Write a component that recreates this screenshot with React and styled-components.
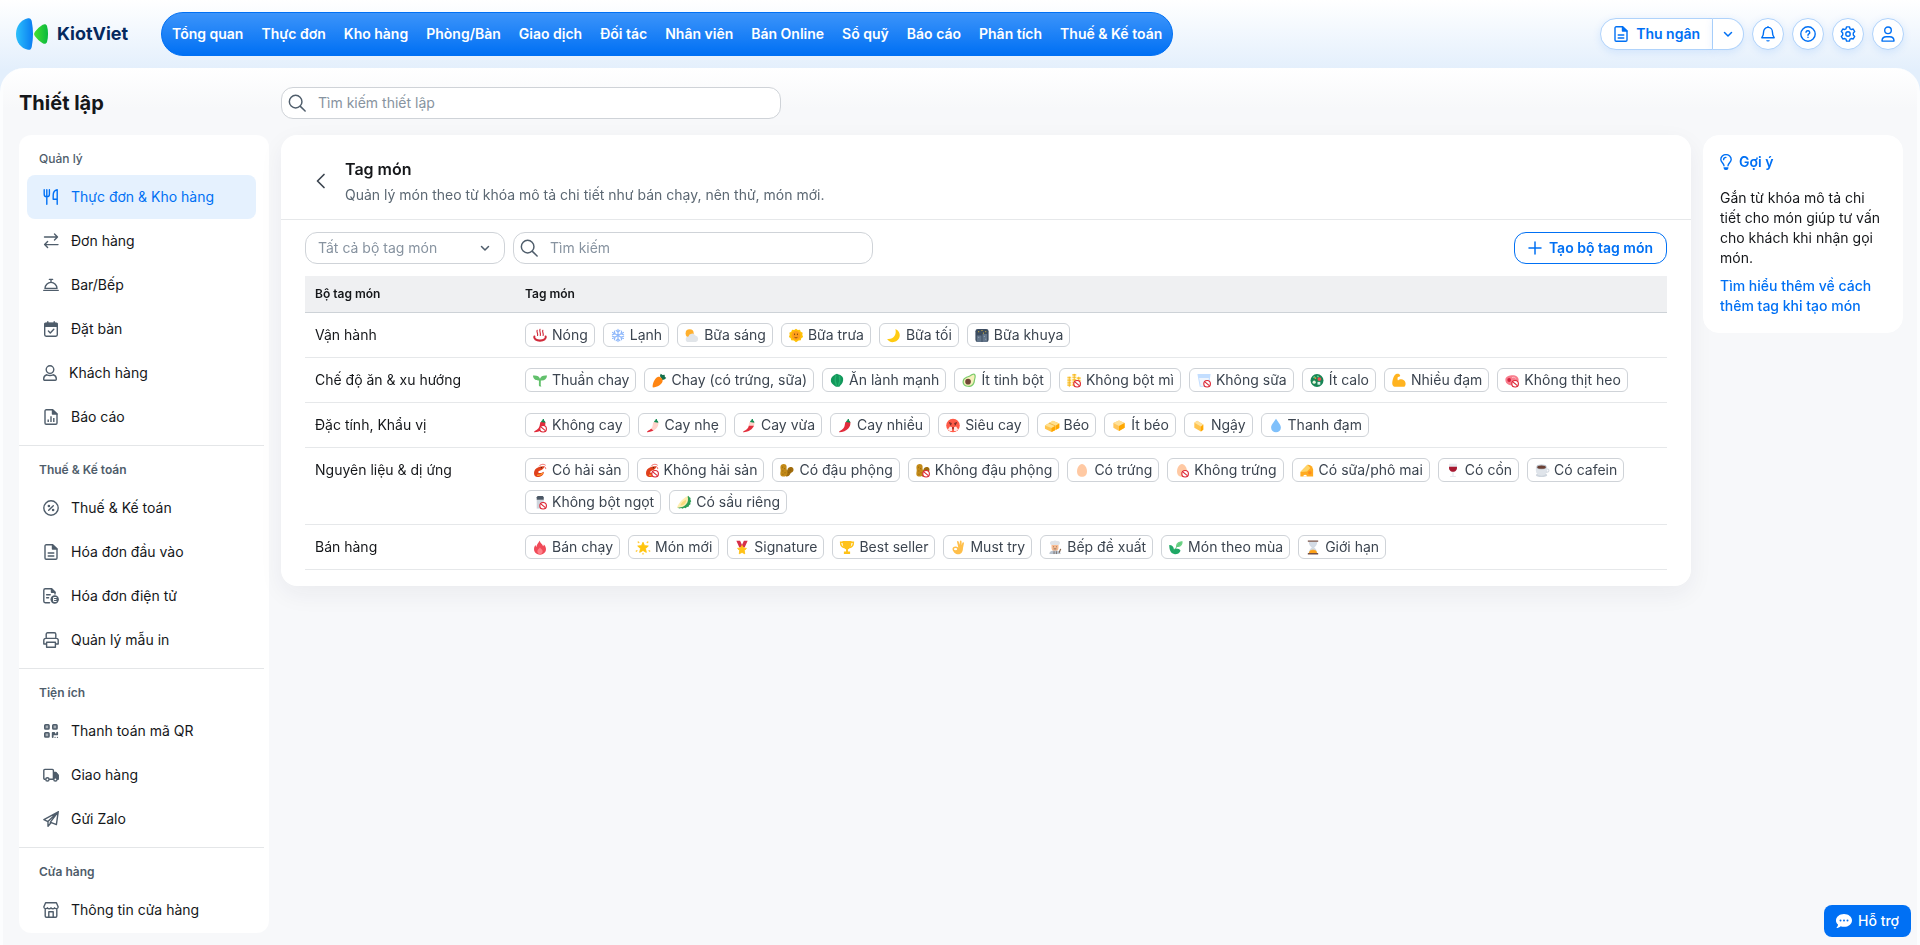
import React from "react";
import styled, { createGlobalStyle, css } from "styled-components";

const blue = "#0070f4";
const slate = "#4f5d6b";

const GlobalStyle = createGlobalStyle`
  *, *::before, *::after { box-sizing: border-box; }
  body {
    margin: 0;
    font-family: Inter, "Noto Sans", sans-serif;
    font-size: 14px;
    line-height: 20px;
    color: #15171a;
  }
  h1, h2, h3, p { margin: 0; }
  a { color: inherit; text-decoration: none; }
  button, input, select { font: inherit; color: inherit; }
  button { cursor: pointer; }
`;

/* Shell */
const Page = styled.div`
  display: flex;
  flex-direction: column;
  height: 100vh;
  background: #e3effc;
`;

const Header = styled.header`
  display: flex;
  flex: none;
  align-items: center;
  height: 92px;
  margin-bottom: -24px;
  padding: 0 16px 24px;
  background: linear-gradient(#ffffff, #e3effc 70px);
`;

const Logo = styled.a`
  display: flex;
  align-items: center;
  gap: 8px;
  width: 145px;
  color: #05295e;
  font-size: 18px;
  font-weight: 700;
`;

const Nav = styled.nav`
  display: flex;
  align-items: center;
  gap: 18px;
  height: 44px;
  padding: 0 10px;
  border: 1px solid ${blue};
  border-radius: 22px;
  background: linear-gradient(#3c94fa, ${blue});
  color: #fff;
  font-weight: 600;
  white-space: nowrap;
`;

const Actions = styled.div`
  display: flex;
  gap: 8px;
  margin-left: auto;
`;

const pill = css`
  display: flex;
  align-items: center;
  justify-content: center;
  height: 32px;
  border: 1px solid #b0d3fb;
  background: #fff;
  color: ${blue};
  box-shadow: 0 2px 8px rgba(0, 112, 244, 0.12);
`;

const RoundButton = styled.button`
  ${pill}
  width: 32px;
  padding: 0;
  border-radius: 16px;
`;

const SplitButton = styled.div`
  display: flex;
`;

const Cashier = styled.button`
  ${pill}
  gap: 7px;
  padding: 0 12px;
  border-radius: 16px 0 0 16px;
  font-weight: 600;
`;

const CashierMore = styled.button`
  ${pill}
  width: 31px;
  padding: 0;
  border-left: 0;
  border-radius: 0 16px 16px 0;
`;

const Panel = styled.div`
  display: flex;
  flex: 1;
  flex-direction: column;
  min-height: 0;
  padding: 19px 14px 12px 16px;
  border: solid #fcfdfe;
  border-width: 0 3px;
  border-radius: 24px 24px 0 0;
  background: linear-gradient(#ffffff, #f7f8fa 40px);
`;

const Top = styled.div`
  display: flex;
  align-items: center;
  margin-bottom: 16px;
`;

const PageTitle = styled.h1`
  width: 262px;
  font-size: 20px;
  font-weight: 700;
  line-height: 24px;
`;

const SearchBox = styled.label`
  display: flex;
  align-items: center;
  gap: 12px;
  width: ${(props) => props.$width};
  height: 32px;
  padding: 0 8px 0 6px;
  border: 1px solid #cfd3d8;
  border-radius: 12px;
  background: #fff;
  color: ${slate};

  input {
    flex: 1;
    min-width: 0;
    padding: 0;
    border: 0;
    outline: 0;
    background: transparent;
  }
  input::placeholder {
    color: #8793a0;
    opacity: 1;
  }
`;

const Columns = styled.div`
  display: flex;
  flex: 1;
  gap: 12px;
  min-height: 0;
`;

/* Sidebar */
const Sidebar = styled.aside`
  flex: none;
  width: 250px;
  padding-right: 5px;
  border-radius: 12px;
  background: #fff;
  overflow-y: auto;
  scrollbar-width: none;
`;

const Section = styled.section`
  padding: 16px 8px 6px;

  & + & {
    border-top: 1px solid #e4e6e8;
  }
`;

const SectionTitle = styled.h2`
  margin-bottom: 8px;
  padding-left: 12px;
  color: ${slate};
  font-size: 12px;
  font-weight: ${(props) => (props.$strong ? 600 : 500)};
  line-height: 16px;
`;

const MenuItem = styled.a`
  display: flex;
  align-items: center;
  gap: 12px;
  height: 44px;
  padding: 0 16px;
  border-radius: 8px;
  background: ${(props) => (props.$active ? "#e5f1fe" : "transparent")};
  color: ${(props) => (props.$active ? blue : "#15171a")};

  svg {
    color: ${(props) => (props.$active ? blue : slate)};
  }
`;

/* Tag list */
const Card = styled.main`
  flex: 1;
  align-self: flex-start;
  min-width: 0;
  padding-bottom: 16px;
  border-radius: 16px;
  background: #fff;
  box-shadow: 0 8px 24px rgba(30, 40, 60, 0.06);
`;

const CardHead = styled.div`
  display: flex;
  align-items: center;
  gap: 12px;
  height: 85px;
  padding: 8px 24px 0;
  border-bottom: 1px solid #e6e8ea;
`;

const BackButton = styled.button`
  display: flex;
  align-items: center;
  justify-content: center;
  width: 28px;
  height: 32px;
  padding: 0 0 0 4px;
  border: 0;
  background: none;
  color: #3c4550;
`;

const CardTitle = styled.h2`
  margin-bottom: 4px;
  font-size: 16px;
  font-weight: 600;
  line-height: 24px;
`;

const CardText = styled.p`
  color: #5c6873;
`;

const Toolbar = styled.div`
  display: flex;
  gap: 8px;
  padding: 12px 24px;
`;

const Filter = styled.label`
  display: grid;
  align-items: center;
  width: 200px;

  select,
  svg {
    grid-area: 1 / 1;
  }
  select {
    width: 100%;
    height: 32px;
    padding: 0 32px 0 12px;
    border: 1px solid #cfd3d8;
    border-radius: 12px;
    appearance: none;
    background: #fff;
    color: #8793a0;
  }
  svg {
    justify-self: end;
    margin-right: 12px;
    color: ${slate};
    pointer-events: none;
  }
`;

const CreateButton = styled.button`
  display: flex;
  align-items: center;
  gap: 7px;
  height: 32px;
  margin-left: auto;
  padding: 0 13px;
  border: 1px solid ${blue};
  border-radius: 12px;
  background: #fff;
  color: ${blue};
  font-weight: 600;
`;

const TableWrap = styled.div`
  padding: 0 24px;
`;

const Table = styled.table`
  width: 100%;
  border-spacing: 0;
  table-layout: fixed;
  text-align: left;

  th {
    height: 37px;
    padding: 0 10px;
    border-bottom: 1px solid #cdd2d7;
    background: #eff0f2;
    font-size: 12px;
    font-weight: 600;
  }
  th:first-child {
    width: 210px;
  }
  td {
    padding: 10px;
    border-bottom: 1px solid #e6e8ea;
    vertical-align: top;
    line-height: 24px;
  }
`;

const Tags = styled.div`
  display: flex;
  flex-wrap: wrap;
  gap: 8px;
`;

const Tag = styled.span`
  display: inline-flex;
  align-items: center;
  gap: 4px;
  height: 24px;
  padding: 0 6px;
  border: 1px solid #cfd3d8;
  border-radius: 6px;
  color: #3c4550;
  line-height: 20px;
  white-space: nowrap;
`;

/* Hint */
const Hint = styled.aside`
  flex: none;
  align-self: flex-start;
  width: 200px;
  padding: 16px;
  border: 1px solid #fff;
  border-radius: 16px;
  background: #fff;
`;

const HintTitle = styled.h3`
  display: flex;
  align-items: center;
  gap: 7px;
  margin-bottom: 16px;
  color: ${blue};
  font-size: 14px;
  font-weight: 600;
`;

const HintLink = styled.a`
  display: block;
  margin-top: 8px;
  color: ${blue};
  font-weight: 500;
`;

const Support = styled.button`
  position: fixed;
  right: 9px;
  bottom: 8px;
  display: flex;
  align-items: center;
  gap: 6px;
  height: 32px;
  padding: 0 12px;
  border: 0;
  border-radius: 8px;
  background: ${blue};
  color: #fff;
  font-weight: 500;
`;

/* Line icons */
const IconSvg = styled.svg`
  flex: none;
`;

const Icon = ({ children, size = 16, width, stroke = 1.4, box }) => (
  <IconSvg
    width={width || size}
    height={size}
    viewBox={box || "0 0 16 16"}
    fill="none"
    stroke="currentColor"
    strokeWidth={stroke}
    strokeLinecap="round"
    strokeLinejoin="round"
    aria-hidden="true"
  >
    {children}
  </IconSvg>
);

const docPath = "M3.5.8H9.5L14 5V14a1.2 1.2 0 0 1-1.2 1.2H3.2A1.2 1.2 0 0 1 2 14V2A1.2 1.2 0 0 1 3.5.8Z";
const docFold = <path d="M9.5.8V5H14Z" fill="currentColor" />;

const icons = {
  food: (
    <Icon>
      <path d="M1.2.8v4.4a2.6 2.6 0 0 0 5.2 0V.8M3.8.8v14.4M14.2 15.2V.8c-2.6.6-4 2.8-4 5.4v4h4" />
    </Icon>
  ),
  swap: (
    <Icon>
      <path d="M1.5 4h13M11.5 1l3 3-3 3M15 11.6H2M4.6 8.6l-3 3 3 3" />
    </Icon>
  ),
  bell: (
    <Icon>
      <path d="M.8 13.4h14.4M2 11.4a6 6 0 0 1 12 0ZM8 5V2.6M6.4 2.4h3.2" />
    </Icon>
  ),
  calendar: (
    <Icon>
      <rect x="1.7" y="2.2" width="12.6" height="13" rx="1.4" />
      <path d="M2 2.4h12v2.8H2Z" fill="currentColor" />
      <path d="M4.8.8v2M11.2.8v2M5.4 10l1.9 1.9 3.5-3.6" />
    </Icon>
  ),
  user: (
    <Icon width={14} box="0 0 14 16">
      <circle cx="7" cy="4.6" r="3.8" />
      <path d="M3.8 9.8c2 .9 4.4.9 6.4 0 2 .5 3.1 2 3.1 4v.4a1 1 0 0 1-1 1H1.7a1 1 0 0 1-1-1v-.4c0-2 1.100-3.500 3.100-4Z" />
    </Icon>
  ),
  report: (
    <Icon>
      <path d={docPath} />
      {docFold}
      <path d="M5.2 13v-2.500M8 13V7.200M10.800 13V9" strokeLinecap="butt" />
    </Icon>
  ),
  percent: (
    <Icon>
      <circle cx="8" cy="8" r="7.2" />
      <path d="M5.7 10.3l4.6-4.6" />
      <circle cx="5.9" cy="6" r=".6" fill="currentColor" />
      <circle cx="10.1" cy="10" r=".6" fill="currentColor" />
    </Icon>
  ),
  doc: (
    <Icon>
      <path d={docPath} />
      {docFold}
      <path d="M5.2 9h5.6M5.2 12h5.6" />
    </Icon>
  ),
  einvoice: (
    <Icon>
      <path d="M6.5 14.7H2.2A1.4 1.4 0 0 1 .8 13.3V2.2A1.4 1.4 0 0 1 2.2.8H8.500L12 4.200V6" />
      <path d="M8.500.8V4.200H12Z" fill="currentColor" />
      <path d="M3.600 6.800h3.600M3.600 9.800h2" />
      <circle cx="11.700" cy="11.500" r="4.200" fill="currentColor" stroke="none" />
      <path d="M13.200 9.500h-2.600v4H13.200M10.600 11.500h2.400" stroke="#fff" strokeWidth="1" />
    </Icon>
  ),
  printer: (
    <Icon>
      <path d="M3.200 6V2.200A1.400 1.400 0 0 1 4.600.8h6.800a1.400 1.400 0 0 1 1.400 1.400V6M3.200 12H.8V8.200A1.800 1.800 0 0 1 2.600 6.400h10.800a1.800 1.800 0 0 1 1.800 1.800V12h-2.400" />
      <path d="M3.600 10.200h8.800v5H3.600Z" />
    </Icon>
  ),
  qr: (
    <Icon stroke={1.6}>
      <g fill="currentColor" fillOpacity=".5">
        <rect x="1.800" y="1.800" width="4.200" height="4.200" rx=".8" />
        <rect x="9.800" y="1.800" width="4.200" height="4.200" rx=".8" />
        <rect x="1.800" y="9.800" width="4.200" height="4.200" rx=".8" />
      </g>
      <path d="M9.700 14V9.800h1.500v1.600h3V9.600" strokeWidth="1.800" />
      <path d="M12 14.300h.1M14.400 14.300h.1" strokeWidth="1.200" />
    </Icon>
  ),
  truck: (
    <Icon>
      <path d="M2.400 12.200H1.800a1 1 0 0 1-1-1V3.400a1 1 0 0 1 1-1h7.600a1 1 0 0 1 1 1v8.800H6.400M10.600 5.400h2.200l2.400 2.800v4h-.6" />
      <path d="M11 5.600h1.800l2.200 2.800v3H11Z" fill="currentColor" />
      <circle cx="4.400" cy="12.400" r="1.600" fill="#fff" />
      <circle cx="12.400" cy="12.400" r="1.600" fill="#fff" />
    </Icon>
  ),
  plane: (
    <Icon>
      <path d="M15.200.8L.9 8.600l4 2L15.200.8l-1.800 12.800-5-2M5 10.700v4.500l3-3.400M15.200.8L7.200 11.300" />
    </Icon>
  ),
  store: (
    <Icon>
      <path d="M2.600.8h10.800l1.800 4.200a2 2 0 0 1-3.600.8 2.200 2.200 0 0 1-3.600 0 2.200 2.200 0 0 1-3.600 0A2 2 0 0 1 .8 5ZM2.200 7.400V14a1.200 1.200 0 0 0 1.200 1.200h9.200a1.200 1.200 0 0 0 1.200-1.200V7.400" />
      <path d="M5.800 15V9.800h4.400V15" />
    </Icon>
  ),
  search: (
    <Icon size={18} stroke={1.3}>
      <circle cx="6.8" cy="6.8" r="5.6" />
      <path d="M11 11l4.2 4.2" />
    </Icon>
  ),
  down: (
    <Icon stroke={1.5}>
      <path d="M4.500 6.500l3.500 3.500 3.500-3.500" />
    </Icon>
  ),
  back: (
    <Icon stroke={1.7}>
      <path d="M11 1.500L4.500 8l6.500 6.500" />
    </Icon>
  ),
  plus: (
    <Icon width={14} box="1 0 14 16" stroke={1.5}>
      <path d="M8 2v12M2 8h12" />
    </Icon>
  ),
  notify: (
    <Icon>
      <path d="M8 1.400a4.400 4.400 0 0 1 4.400 4.400c0 3.600.8 4.800 1.800 6H1.800c1-1.200 1.800-2.400 1.800-6A4.400 4.400 0 0 1 8 1.400ZM8 .6v.8" />
      <path d="M6.200 14.200h3.600a1.800 1.400 0 0 1-3.600 0Z" fill="currentColor" stroke="none" />
    </Icon>
  ),
  help: (
    <Icon>
      <circle cx="8" cy="8" r="7.2" />
      <path d="M6 6.200A1.800 1.600 0 0 1 7.800 4.800h.4a1.600 1.600 0 0 1 .7 3C8.200 8.200 8 8.500 8 9.200M8 11.300v.1" />
    </Icon>
  ),
  gear: (
    <Icon>
      <path d="M6.500.9h3l.5 1.900 1.300.7 1.900-.5 1.500 2.600-1.400 1.400v2l1.400 1.400-1.500 2.600-1.900-.5-1.300.7-.5 1.900h-3L6 13.200l-1.300-.7-1.900.5-1.500-2.600L2.700 9V7L1.300 5.600 2.800 3l1.900.5L6 2.800Z" />
      <circle cx="8" cy="8" r="2.200" />
    </Icon>
  ),
  account: (
    <Icon>
      <circle cx="8" cy="4.300" r="3.300" />
      <path d="M2 15.100c0-2.700 1.700-4.400 4.300-4.400h3.400c2.600 0 4.300 1.700 4.300 4.400Z" />
    </Icon>
  ),
  bulb: (
    <Icon width={12} box="0 0 12 16">
      <path d="M4 11.700C3.800 9.200.8 8.200.8 5.600a5.200 5 0 0 1 10.400 0c0 2.600-3 3.600-3.200 6.100M3.600 5.600A2.300 2.300 0 0 1 5.900 3.400" />
      <path d="M3.600 13.300h4.800v.6a2 2 0 0 1-2 2h-.8a2 2 0 0 1-2-2Z" fill="currentColor" stroke="none" />
    </Icon>
  ),
  chat: (
    <Icon stroke={0}>
      <path d="M8 1c4.500 0 8 2.900 8 6.400s-3.500 6.400-8 6.400c-1.200 0-2.300-.2-3.300-.6C3.500 14.300 1.800 15 .3 15c1-.9 1.700-2.200 1.700-3.400C.7 10.500 0 9.100 0 7.400 0 3.900 3.500 1 8 1Z" fill="currentColor" />
      <g fill={blue}>
        <circle cx="4.500" cy="7.600" r="1" />
        <circle cx="8" cy="7.600" r="1" />
        <circle cx="11.500" cy="7.600" r="1" />
      </g>
    </Icon>
  ),
};

/* Tag pictures */
const ban = (
  <g fill="none" stroke="#dc2433" strokeWidth="1.200">
    <circle cx="11.300" cy="11.500" r="3.500" fill="#fff" />
    <path d="M8.900 9.500l4.800 4" />
  </g>
);
const stem = <path d="M9 4.200c.6-1 1-1.700 1.800-1.700V1h1.400v1.800c1 .3 1.400 1 1.400 2.200Z" fill="#128a52" />;
const chiliPath = "M8.500 4.200h5.200c.6 5.500-3 10.200-12.100 11 0-1.500 4-2.200 5.400-5.200C7.900 8.300 7.700 6.200 8.500 4.200Z";
const shrimp = (
  <g>
    <path d="M4 14.800C1.300 13.800.9 9.500 2.800 7c1.900-2.600 6-4 9.900-3.500-.2 2.400-2.300 4.100-5 4.700-1.600.4-2.300 2.200-.5 2.500 1.700.3 3-.2 4.700-1.300.8 2.900-3.900 6.700-7.900 5.400Z" fill="#e0401c" />
    <path d="M5 13c3 .4 5-.8 6-2.200" stroke="#ff9d2e" strokeWidth="1.600" fill="none" />
    <path d="M7 3.500C9 1 12 1 14 2.500M12 4c1.500 0 2.300 1 2 2.500" stroke="#f0605c" fill="none" />
    <circle cx="9.500" cy="5" r=".7" fill="#402010" />
  </g>
);
const peanut = (
  <g>
    <path d="M5.800 12.500c.3-3.500 2.200-3.200 2.700-5.500C9 4.500 11.500 3.500 13.500 4.700c2 1.300 1.800 3.800.3 5-1.400 1-2 1.200-2.900 2.800-1.300 2.200-4.500 2.700-5.100 0Z" fill="#a06c0c" />
    <path d="M1 4.500C1 2 2.700 1 4.500 1S8 2.300 7.600 4.500c-.3 1.700.1 2.200.6 4 .6 2.700 0 6-3.700 6S.6 12 1.200 9C1.600 7 1 6.500 1 4.500Z" fill="#c38a18" />
    <path d="M3 4.500h.8M5.200 6h.8M3.200 8.500h.8M5.500 10.500h.8M3.300 12h.8M11 7.500h1M9.500 10h1" stroke="#7d5208" strokeWidth=".9" />
  </g>
);
const egg = <path d="M8 1.200c3 0 5.300 4.400 5.300 7.800 0 3.500-2.200 5.800-5.300 5.800S2.700 12.500 2.700 9C2.700 5.600 5 1.200 8 1.200Z" fill="#ffc9a3" />;

const pictures = {
  hot: (
    <g fill="none" stroke="#d02a3a" strokeWidth="1.200" strokeLinecap="round">
      <path d="M5 2.500c-1 2 1.200 3 .4 5.500M8 1.500c-1 2.200 1.200 3.500.3 6.500M11 2.500c-1 2 1.200 3 .3 5.500" />
      <path d="M2 9.200C1.200 11.500 4 13.500 8 13.500s6.800-2 6-4.300" strokeWidth="2.200" />
    </g>
  ),
  snow: (
    <g fill="none" stroke="#8fb8fb" strokeWidth="1.200" strokeLinecap="round">
      <path d="M8 1.500v13M2.200 4.800l11.600 6.400M2.200 11.200l11.600-6.400M6 2.500l2 2 2-2M6 13.500l2-2 2 2M2 7.200l2.800-1L4.200 3.400M14 8.800l-2.800 1 .6 2.800M2 8.800l2.800 1-.6 2.800M14 7.200l-2.800-1 .6-2.800" />
    </g>
  ),
  cloud: (
    <g>
      <circle cx="5.500" cy="5.800" r="4.300" fill="#ffb02e" />
      <path d="M4.500 15a3 3 0 0 1-.3-6A4 4 0 0 1 11.500 8a3.600 3.600 0 0 1 .5 7Z" fill="#e1e5e9" />
    </g>
  ),
  sun: (
    <g>
      <path d="M8 .8l1.900 1.300 2.300-.3.800 2.200 2.100 1-.4 2.300.8 2.200-1.900 1.400-.5 2.300-2.300.1L8 15.200l-2.200-1.900-2.900-.1-.5-2.300L.5 9.500l.8-2.200L.9 5 3 4l.8-2.200 2.300.3Z" fill="#ffc107" />
      <circle cx="8" cy="8" r="4.700" fill="#ff9f1a" />
      <path d="M6.500 6v1.600M9.500 6v1.600M6.500 10c1 .6 2 .6 3 0" stroke="#6d3b0c" strokeWidth=".9" fill="none" />
    </g>
  ),
  moon: <path d="M9.500 1.200c6.800 3 6.100 12.500-1.800 13.800C4.800 15.500 2 14 .7 11.700 7.500 12.500 11 7.500 9.500 1.200Z" fill="#ffcb12" />,
  night: (
    <g>
      <rect x="1" y="1" width="14" height="14" rx="2.500" fill="#3c4c60" />
      <path d="M2.500 8h5v7h-5ZM8.500 6.500h5V15h-5Z" fill="#63758a" />
      <path d="M4 10h1M10 9h1M11.500 12h1" stroke="#9fb0c0" />
      <path d="M4 4h1M7.500 2.800h1M11.500 4h1M9 5.500h1" stroke="#ffd23a" />
    </g>
  ),
  sprout: <path d="M.5 2.800c4-.5 6.900.8 7.500 3.400.6-2.600 3.500-3.900 7.500-3.400-.3 4-3.100 5.700-6.600 5.200l-.1 4.500c0 1.300.6 1.800 1.200 2H8c-.9-.4-1.200-1-1.200-2L6.900 8C3.600 8.300.8 6.800.5 2.800Z" fill="#62c06c" />,
  carrot: (
    <g>
      <path d="M9 3.200l.8-2.400 2 1.400 2.200-.2.200 2 1.500 1.500-2 1.500-2.200.5Z" fill="#14704c" />
      <path d="M6.500 4.200c2.200-1.200 6 1.600 5.300 4.500-.8 3.500-5.300 6-10.300 6.700C.4 13 2.900 6 6.500 4.200Z" fill="#ff8512" />
    </g>
  ),
  green: (
    <g>
      <path d="M8 .8c1.200.8 2.500.8 3.500 1.500C13.500 3.500 15 5 14.500 8c-.4 3-2.300 4.500-4 6.700H7C4.500 13 1.200 11 1.500 7.500 1.700 4 4.500 3 5.500 1.800Z" fill="#12975b" />
      <path d="M7 2.500c-1.500 3-1 7 .5 11M10.500 3c1 3.500.5 7-1 10.500" stroke="#23b26d" strokeWidth="1.500" fill="none" />
    </g>
  ),
  avocado: (
    <g>
      <path d="M14.600 1.300c1.500 2-.1 4.900-.3 7.200-.4 4.700-4.300 7-8 6.300C2 14.200.2 10.800 1.600 7.300 3 4.200 7 3.800 9 2.500c2-1.200 4.200-2.700 5.600-1.200Z" fill="#7ccb6c" />
      <path d="M13.600 2.500c.9 1.600-.4 4-.6 6-.4 3.700-3.500 5.700-6.400 5.100-3.400-.7-4.900-3.100-3.800-5.900 1.200-2.700 4.700-2.900 6.800-4.200 1.700-1 3.300-2.300 4-1Z" fill="#f6f0bb" />
      <circle cx="7" cy="9.300" r="3" fill="#6f4636" />
    </g>
  ),
  wheat: (
    <g>
      <g stroke="#ffcf4a" strokeWidth="4.200" strokeDasharray="2 .7">
        <path d="M3 4v10M8.300 1v13M13 4.500v9" />
      </g>
      <path d="M3 4v11M8.300 1v14M13 4v10" stroke="#e9a91d" strokeWidth=".8" />
      {ban}
    </g>
  ),
  milk: (
    <g>
      <path d="M1 1.200h14L13 14.800H3.500Z" fill="#c3deff" />
      <path d="M2.800 5.500h10.400L12 13.800H4.500Z" fill="#f0f5fc" />
      {ban}
    </g>
  ),
  salad: (
    <g>
      <circle cx="8" cy="8" r="6.900" fill="#188555" />
      <path d="M4 5l2-1M8 3.500l2 .5" stroke="#5cd18a" strokeWidth="1.500" />
      <circle cx="10.500" cy="6.500" r="2" fill="#f04e51" />
      <circle cx="5" cy="9.800" r="1.700" fill="#e8f5db" />
      <path d="M8.500 9.500h3v3h-3Z" fill="#d9f2ec" />
      <circle cx="6.300" cy="5.500" r="1" fill="#f59c35" />
    </g>
  ),
  arm: (
    <path
      d="M5 1.200c1.600-.8 4-.2 4.200 1.300.2 1.300-1 1.900-2.400 1.800-.6 1.200-.4 2.600.1 3.800 1.600-1.500 4.400-1.800 6.300-.4 2.700 2.100 2 6.200.3 7H3.500c-3.200-.5-3-4.500-2-8C2.300 4.200 3.200 2.100 5 1.200Z"
      fill="#ffb31f"
    />
  ),
  pork: (
    <g>
      <path d="M1 6.500c.5-3.500 9-5.500 12.500-2.500 2.300 2 2 5.500-.5 7.500-3 2-6 2-8.500 1C1.700 11.500.7 9 1 6.500Z" fill="#f87c8c" />
      <circle cx="5" cy="7.500" r="2" fill="#d1243f" />
      <path d="M8 5c2-.8 3.500-.3 4 1" stroke="#ffc4c9" fill="none" />
      {ban}
    </g>
  ),
  noChili: (
    <g>
      <path d={chiliPath} fill="#e12d3d" />
      {stem}
      {ban}
    </g>
  ),
  chiliLight: (
    <g>
      <path d={chiliPath} fill="#ffd3cb" />
      <path d="M6 11.600c-1.400 1.600-4.400 2.100-4.400 3.600 2.900-.3 5.100-.9 6.900-1.800Z" fill="#e12d3d" />
      {stem}
    </g>
  ),
  chiliMid: (
    <g>
      <path d={chiliPath} fill="#ffd3cb" />
      <path d="M7.900 8.200C6.900 13 1.600 13.500 1.600 15.200c6.400-.5 10.200-3.500 11.600-7Z" fill="#e12d3d" />
      {stem}
    </g>
  ),
  chili: (
    <g>
      <path d={chiliPath} fill="#e12d3d" />
      {stem}
    </g>
  ),
  hotFace: (
    <g>
      <circle cx="8" cy="8" r="7.200" fill="#ff5a48" />
      <path d="M3.800 5.200l2.700.8M12.200 5.200l-2.700.8M4.800 7.300h1.500M9.700 7.300h1.500" stroke="#54201c" strokeWidth="1.100" />
      <path d="M2.500 12.200l2.200-3 2.300.8v4l-2.500-.2ZM9 10l2.300-.8 2.200 3-2 1.600-2.500.2Z" fill="#ffe9e5" />
      <path d="M7.300 9.500h1.400V12H7.300Z" fill="#84201c" />
    </g>
  ),
  butter: (
    <g>
      <path d="M.5 8L9 3l6.700 2.800v5L7.500 15 .5 11.500Z" fill="#ffc44e" />
      <path d="M.5 8L9 3l6.700 2.800-8.200 5Z" fill="#ffe08f" />
      <path d="M7.500 10.800V15l3.800-2V8.500ZM12.300 8v4.500l3.400-1.900V5.900Z" fill="#ffa700" />
      <path d="M4.800 5.500l7 3" stroke="#f3b53d" />
    </g>
  ),
  butterCube: (
    <g>
      <path d="M8 2.800l6 2.700v5L8 14l-6-3.500v-5Z" fill="#ffc65c" />
      <path d="M8 2.800l6 2.700-6 3-6-3Z" fill="#ffe19a" />
      <path d="M8 8.500l6-3v5L8 14Z" fill="#ffa700" />
    </g>
  ),
  butterSlice: (
    <g>
      <path d="M3 5l3-2 6.500 4v5.500L10 14.500l-7-4Z" fill="#ffc44e" />
      <path d="M10 9l2.500-2v5.500L10 14.500Z" fill="#ffa700" />
      <path d="M3 5l3-2 6.500 4L10 9Z" fill="#ffe19a" />
    </g>
  ),
  drop: <path d="M8 .8c2.500 4 5.200 6.500 5.200 9.300a5.200 5.200 0 0 1-10.400 0C2.800 7.300 5.500 4.800 8 .8Z" fill="#7fc0fb" />,
  shrimp,
  noShrimp: (
    <g>
      {shrimp}
      {ban}
    </g>
  ),
  peanut,
  noPeanut: (
    <g>
      {peanut}
      {ban}
    </g>
  ),
  egg,
  noEgg: (
    <g>
      {egg}
      {ban}
    </g>
  ),
  cheese: (
    <g>
      <path d="M1 9.500L8.500 2C12 1.500 14 4 14.500 7v7.500H1Z" fill="#ffab20" />
      <path d="M1 9.500L8.500 2l3 3.500L8 9Z" fill="#ffd467" />
      <circle cx="11" cy="10.500" r="1.900" fill="#ff8c1d" />
      <path d="M4 14.500a2 2 0 0 1 4 0Z" fill="#fff" />
    </g>
  ),
  wine: (
    <g>
      <path d="M4 .8h8c.8 4-.6 8-4 8s-4.800-4-4-8ZM7.400 8.800h1.200v5H11v1.200H5v-1.200h2.400Z" fill="#e5e9ee" />
      <path d="M3.800 4h8.400c.4 3.200-1.300 5.300-4.200 5.300S3.400 7.200 3.800 4Z" fill="#a71931" />
    </g>
  ),
  coffee: (
    <g>
      <ellipse cx="7.500" cy="13" rx="6" ry="2" fill="#cfd6de" />
      <path d="M1.500 4.500h12V8c0 3.500-2.800 5.500-6 5.500s-6-2-6-5.500Z" fill="#dfe4ea" />
      <path d="M13 6.500h.8a1.600 1.600 0 0 1 0 3.200h-1.600" stroke="#d5dbe2" strokeWidth="1.200" fill="none" />
      <ellipse cx="7.500" cy="4.300" rx="5.500" ry="2.600" fill="#b9c1cb" />
      <ellipse cx="7.500" cy="4.500" rx="4.600" ry="1.800" fill="#6b4034" />
    </g>
  ),
  salt: (
    <g>
      <path d="M4.500 5h7.500v9.500H4.500Z" fill="#cdd4dc" />
      <path d="M5.500 1h5.500L12 2.500V5H4.500V2.500Z" fill="#4b5765" />
      {ban}
    </g>
  ),
  durian: (
    <g>
      <path d="M12.500.8l1.300 1.700 1.200.8-.2 1.800.9 1.500-1 1.500.2 1.800-1.500 1-.5 1.700-1.800.3-1.300 1.200-1.700-.4-1.600 1-1.600-.7-1.500.5L1 13.500Z" fill="#2f9f55" />
      <path d="M11.800 1.500c2 6.500-2.300 12.500-11.300 12C2.500 8.500 6.800 3.500 11.800 1.500Z" fill="#ffeeb0" />
      <path d="M10.300 5c.2 4-2.800 6.200-6.300 6.300 1-2.800 3.200-5.300 6.300-6.300Z" fill="#f9da7c" />
    </g>
  ),
  fire: (
    <g>
      <path d="M7.800.5C7.500 3 10.800 4.300 11.300 6.800c.5-.5.8-1.200.8-2 2.500 2.200 3 6 1.200 8.400-2.700 3.500-8.500 3-10.700-.2C.7 10 2 7 3.200 5.500c0 .9.400 1.600 1 2C4.300 5 5.800 3.500 7.800.5Z" fill="#f04a58" />
      <path d="M8 7.800c.2 1.500 2.800 2 2.800 4.200 0 1.900-1.200 3-2.800 3s-2.800-1.100-2.800-3C5.200 10 7.500 9.300 8 7.800Z" fill="#ff7f88" />
    </g>
  ),
  star: (
    <g>
      <path d="M8 2.500l1.600 3.600 4 .4-3 2.700.9 4L8 11.200l-3.500 2 .9-4-3-2.700 4-.4Z" fill="#ffc40c" stroke="#ffc40c" strokeLinejoin="round" />
      <path d="M8 14.300v.7M1.500 11.500l-.6.400M14.500 11.500l.6.400M3.500 2.700l-.6-.6M12.500 2.700l.6-.6" stroke="#ffc93c" strokeWidth="1.500" strokeLinecap="round" />
    </g>
  ),
  medal: (
    <g>
      <path d="M2 .8h4l2 4.500 2-4.500h4L10.800 8H5.200Z" fill="#d62f48" />
      <path d="M8 5.800l1.500 2.700 3.200.5-2.300 2.300.5 3.400L8 13.200l-2.900 1.500.5-3.400L3.300 9l3.200-.5Z" fill="#ffc218" stroke="#ffc218" strokeLinejoin="round" />
    </g>
  ),
  trophy: (
    <g>
      <path d="M4 2.500H1.200c0 3.500 1 5 3.800 5.500M12 2.500h2.800c0 3.500-1 5-3.800 5.500" stroke="#ffc218" strokeWidth="1.500" fill="none" />
      <path d="M3.200 1h9.600c.1 4.500-1 8-3.800 9v2.200h2.300V15H4.700v-2.800H7V10C4.200 9 3.100 5.500 3.200 1Z" fill="#ffc218" />
    </g>
  ),
  hand: (
    <g>
      <path
        d="M8.300 8L7 2.300C6.800 1 8.300.6 8.700 1.800l1 3.200.3-3.400c.1-1.300 1.700-1.200 1.800 0l.1 4 .7-2.400c.4-1.200 1.900-.8 1.700.5l-1 4.800c0 3.500-1.700 6.700-5 6.700-3 0-5.300-2-5.300-4.300Z"
        fill="#ffbf4a"
      />
      <ellipse cx="5.400" cy="9.700" rx="2.500" ry="2" fill="#fff" stroke="#ffbf4a" strokeWidth="1.500" />
    </g>
  ),
  chef: (
    <g>
      <path d="M3.800 5.500C1.500 3.500 3.200.8 5.800 1.300c1-1 3.400-1 4.400 0 2.600-.5 4.300 2.200 2 4.200Z" fill="#dfe3e8" />
      <path d="M4.300 5.500h7.400v2.700a3.700 3.700 0 0 1-7.400 0Z" fill="#f8bb91" />
      <path d="M2 15c0-2.700 2-3.800 6-3.800s6 1.100 6 3.800Z" fill="#b9c3cf" />
      <path d="M6 7.300h1M9 7.300h1M6.500 9.500h3M7 12v3M9.500 12v3" stroke="#68584f" strokeWidth=".8" />
      <path d="M14 9.500l-1.500 4" stroke="#7a5a42" strokeWidth="1.300" />
    </g>
  ),
  leaf: (
    <g>
      <path d="M15 1.500c.3 4.500-2.700 6.700-7 6C7.700 3.800 10.500 1.500 15 1.500Z" fill="#6fd487" />
      <path d="M.8 5.500c3.200 0 4.700 2 5 4.300C8 8.500 12 9.500 12.800 11.500c-1 2.800-3.300 3.800-6 3.700C2.500 14.800.8 11 .8 5.500Z" fill="#1fa866" />
      <path d="M13 3L5.500 11" stroke="#57bd75" strokeWidth=".9" />
    </g>
  ),
  glass: (
    <g>
      <path d="M3.500 2h9c0 3.300-1.500 4.800-3.300 6 1.800 1.300 3.300 3 3.300 6h-9c0-3 1.500-4.700 3.300-6C5 6.800 3.500 5.300 3.500 2Z" fill="#d3dbe5" />
      <path d="M4.200 13.500c0-3.500 7.600-3.500 7.600 0Z" fill="#ffa010" stroke="#ffa010" />
      <path d="M2.500 1.300h11M2.500 14.700h11" stroke="#765044" strokeWidth="1.400" />
    </g>
  ),
};

const Picture = ({ name }) => (
  <IconSvg width="16" height="16" viewBox="0 -1 16 17" aria-hidden="true">
    {pictures[name]}
  </IconSvg>
);

/* Data */
const navItems = [
  "Tổng quan",
  "Thực đơn",
  "Kho hàng",
  "Phòng/Bàn",
  "Giao dịch",
  "Đối tác",
  "Nhân viên",
  "Bán Online",
  "Sổ quỹ",
  "Báo cáo",
  "Phân tích",
  "Thuế & Kế toán",
];

const menu = [
  {
    title: "Quản lý",
    items: [
      ["food", "Thực đơn & Kho hàng"],
      ["swap", "Đơn hàng"],
      ["bell", "Bar/Bếp"],
      ["calendar", "Đặt bàn"],
      ["user", "Khách hàng"],
      ["report", "Báo cáo"],
    ],
  },
  {
    title: "Thuế & Kế toán",
    items: [
      ["percent", "Thuế & Kế toán"],
      ["doc", "Hóa đơn đầu vào"],
      ["einvoice", "Hóa đơn điện tử"],
      ["printer", "Quản lý mẫu in"],
    ],
  },
  {
    title: "Tiện ích",
    items: [
      ["qr", "Thanh toán mã QR"],
      ["truck", "Giao hàng"],
      ["plane", "Gửi Zalo"],
    ],
  },
  {
    title: "Cửa hàng",
    items: [["store", "Thông tin cửa hàng"]],
  },
];

const tagSets = [
  {
    name: "Vận hành",
    tags: [
      ["hot", "Nóng"],
      ["snow", "Lạnh"],
      ["cloud", "Bữa sáng"],
      ["sun", "Bữa trưa"],
      ["moon", "Bữa tối"],
      ["night", "Bữa khuya"],
    ],
  },
  {
    name: "Chế độ ăn & xu hướng",
    tags: [
      ["sprout", "Thuần chay"],
      ["carrot", "Chay (có trứng, sữa)"],
      ["green", "Ăn lành mạnh"],
      ["avocado", "Ít tinh bột"],
      ["wheat", "Không bột mì"],
      ["milk", "Không sữa"],
      ["salad", "Ít calo"],
      ["arm", "Nhiều đạm"],
      ["pork", "Không thịt heo"],
    ],
  },
  {
    name: "Đặc tính, Khẩu vị",
    tags: [
      ["noChili", "Không cay"],
      ["chiliLight", "Cay nhẹ"],
      ["chiliMid", "Cay vừa"],
      ["chili", "Cay nhiều"],
      ["hotFace", "Siêu cay"],
      ["butter", "Béo"],
      ["butterCube", "Ít béo"],
      ["butterSlice", "Ngậy"],
      ["drop", "Thanh đạm"],
    ],
  },
  {
    name: "Nguyên liệu & dị ứng",
    tags: [
      ["shrimp", "Có hải sản"],
      ["noShrimp", "Không hải sản"],
      ["peanut", "Có đậu phộng"],
      ["noPeanut", "Không đậu phộng"],
      ["egg", "Có trứng"],
      ["noEgg", "Không trứng"],
      ["cheese", "Có sữa/phô mai"],
      ["wine", "Có cồn"],
      ["coffee", "Có cafein"],
      ["salt", "Không bột ngọt"],
      ["durian", "Có sầu riêng"],
    ],
  },
  {
    name: "Bán hàng",
    tags: [
      ["fire", "Bán chạy"],
      ["star", "Món mới"],
      ["medal", "Signature"],
      ["trophy", "Best seller"],
      ["hand", "Must try"],
      ["chef", "Bếp đề xuất"],
      ["leaf", "Món theo mùa"],
      ["glass", "Giới hạn"],
    ],
  },
];

const LogoMark = () => (
  <svg width="33" height="32" viewBox="0 0 33 32" aria-hidden="true">
    <defs>
      <linearGradient id="logoBlue">
        <stop offset="0" stopColor="#2cc0fb" />
        <stop offset="1" stopColor="#0a7cf2" />
      </linearGradient>
      <linearGradient id="logoGreen">
        <stop offset="0" stopColor="#45e02f" />
        <stop offset="1" stopColor="#09b83f" />
      </linearGradient>
    </defs>
    <path d="M12 .2C14.5-.2 15.3 1.2 15.8 3.5c1.6 8 1.6 17 0 25-.5 2.3-1.300 3.700-3.800 3.300C5 30.500 0 24 0 16S5 1.500 12 .2Z" fill="url(#logoBlue)" />
    <path d="M19 13.800c2.300-3 4.800-5.300 7.700-7 2-1.200 3.700-.5 4.300 1.200 1.400 4.600 1.400 11.400 0 16-.6 1.700-2.300 2.400-4.300 1.200-2.900-1.700-5.400-4-7.700-7-1.200-1.600-1.200-2.800 0-4.400Z" fill="url(#logoGreen)" />
  </svg>
);

export default function App() {
  return (
    <Page>
      <GlobalStyle />
      <Header>
        <Logo href="#">
          <LogoMark />
          KiotViet
        </Logo>
        <Nav>
          {navItems.map((item) => (
            <a href="#" key={item}>
              {item}
            </a>
          ))}
        </Nav>
        <Actions>
          <SplitButton>
            <Cashier>
              {icons.doc}
              Thu ngân
            </Cashier>
            <CashierMore aria-label="Thêm">{icons.down}</CashierMore>
          </SplitButton>
          <RoundButton aria-label="Thông báo">{icons.notify}</RoundButton>
          <RoundButton aria-label="Trợ giúp">{icons.help}</RoundButton>
          <RoundButton aria-label="Thiết lập">{icons.gear}</RoundButton>
          <RoundButton aria-label="Tài khoản">{icons.account}</RoundButton>
        </Actions>
      </Header>

      <Panel>
        <Top>
          <PageTitle>Thiết lập</PageTitle>
          <SearchBox $width="500px">
            {icons.search}
            <input type="text" placeholder="Tìm kiếm thiết lập" aria-label="Tìm kiếm thiết lập" />
          </SearchBox>
        </Top>

        <Columns>
          <Sidebar>
            {menu.map((section, i) => (
              <Section key={section.title}>
                <SectionTitle $strong={i > 0}>{section.title}</SectionTitle>
                {section.items.map(([icon, label]) => (
                  <MenuItem href="#" key={label} $active={icon === "food"}>
                    {icons[icon]}
                    {label}
                  </MenuItem>
                ))}
              </Section>
            ))}
          </Sidebar>

          <Card>
            <CardHead>
              <BackButton aria-label="Quay lại">{icons.back}</BackButton>
              <div>
                <CardTitle>Tag món</CardTitle>
                <CardText>Quản lý món theo từ khóa mô tả chi tiết như bán chạy, nên thử, món mới.</CardText>
              </div>
            </CardHead>
            <Toolbar>
              <Filter>
                <select aria-label="Bộ tag món">
                  <option>Tất cả bộ tag món</option>
                </select>
                {icons.down}
              </Filter>
              <SearchBox $width="360px">
                {icons.search}
                <input type="text" placeholder="Tìm kiếm" aria-label="Tìm kiếm" />
              </SearchBox>
              <CreateButton>
                {icons.plus}
                Tạo bộ tag món
              </CreateButton>
            </Toolbar>
            <TableWrap>
              <Table>
                <thead>
                  <tr>
                    <th>Bộ tag món</th>
                    <th>Tag món</th>
                  </tr>
                </thead>
                <tbody>
                  {tagSets.map((set) => (
                    <tr key={set.name}>
                      <td>{set.name}</td>
                      <td>
                        <Tags>
                          {set.tags.map(([picture, label]) => (
                            <Tag key={label}>
                              <Picture name={picture} />
                              {label}
                            </Tag>
                          ))}
                        </Tags>
                      </td>
                    </tr>
                  ))}
                </tbody>
              </Table>
            </TableWrap>
          </Card>

          <Hint>
            <HintTitle>
              {icons.bulb}
              Gợi ý
            </HintTitle>
            <p>Gắn từ khóa mô tả chi tiết cho món giúp tư vấn cho khách khi nhận gọi món.</p>
            <HintLink href="#">Tìm hiểu thêm về cách thêm tag khi tạo món</HintLink>
          </Hint>
        </Columns>
      </Panel>

      <Support>
        {icons.chat}
        Hỗ trợ
      </Support>
    </Page>
  );
}
